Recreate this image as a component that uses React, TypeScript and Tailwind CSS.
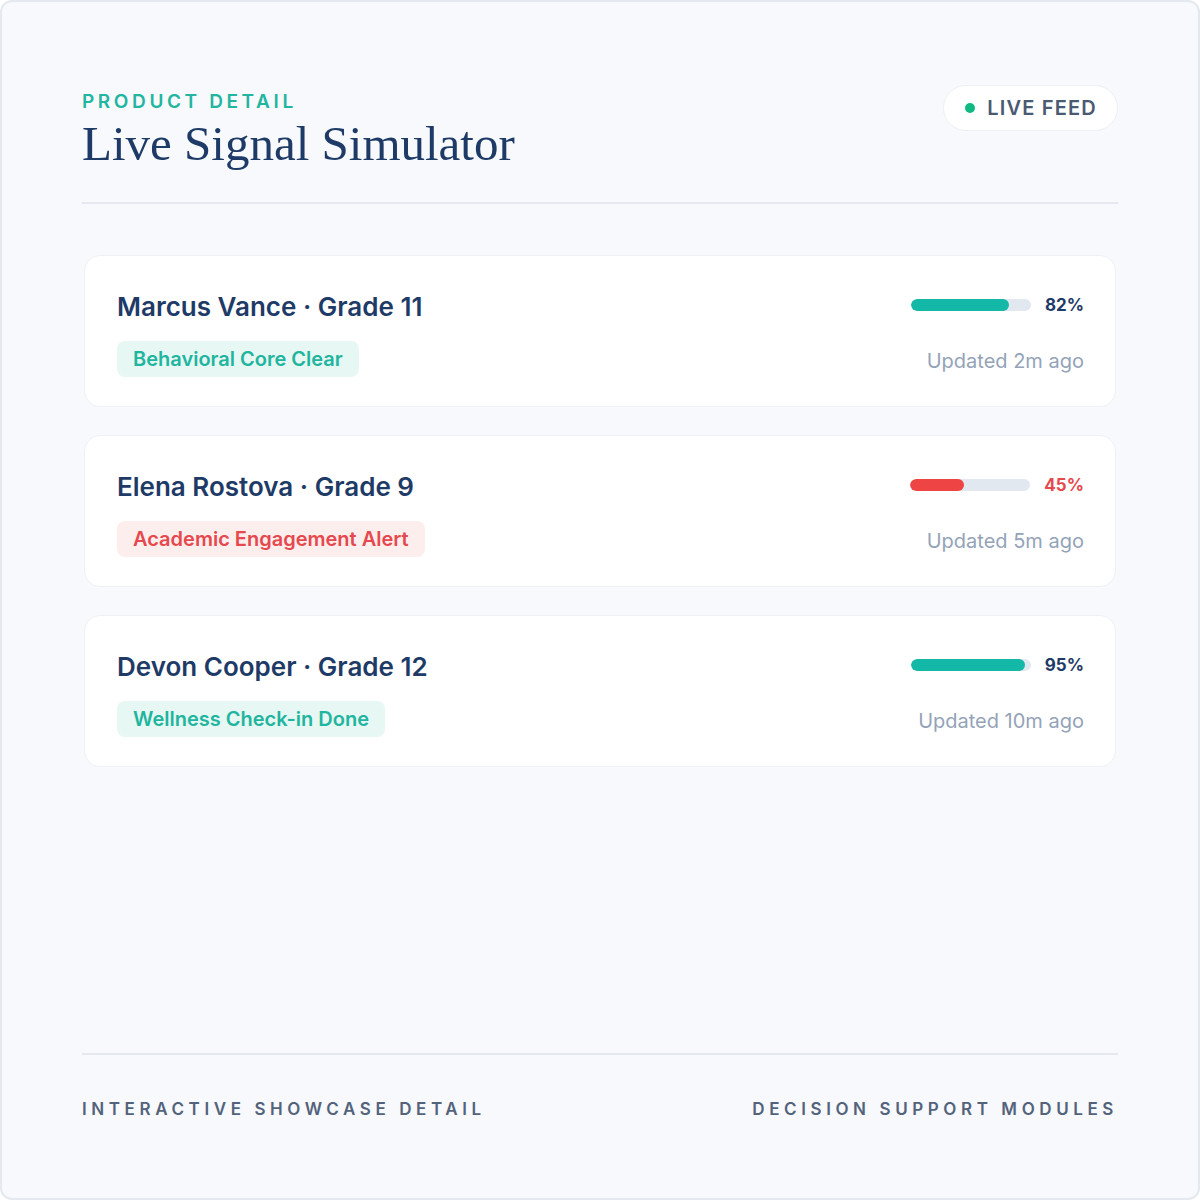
const students = [
  {
    name: 'Marcus Vance · Grade 11',
    tag: 'Behavioral Core Clear',
    alert: false,
    score: 82,
    updated: 'Updated 2m ago',
  },
  {
    name: 'Elena Rostova · Grade 9',
    tag: 'Academic Engagement Alert',
    alert: true,
    score: 45,
    updated: 'Updated 5m ago',
  },
  {
    name: 'Devon Cooper · Grade 12',
    tag: 'Wellness Check-in Done',
    alert: false,
    score: 95,
    updated: 'Updated 10m ago',
  },
];

function SignalCard({ s }: { s: (typeof students)[number] }) {
  return (
    <div className="flex h-[152px] items-start justify-between rounded-2xl border border-[#eef2f6] bg-white px-8 pt-[33px]">
      <div className="flex flex-col items-start gap-[16px]">
        <h3 className="text-[26px] leading-9 font-semibold text-[#1e3a66]">{s.name}</h3>
        <span
          className={[
            'rounded-lg px-4 pt-[6px] pb-[5px] text-[20px] leading-[25px] font-semibold',
            s.alert ? 'bg-[#fdeeee] text-[#e5484d]' : 'bg-[#e7f7f4] text-[#1fb59e]',
          ].join(' ')}
        >
          {s.tag}
        </span>
      </div>
      <div className="-mr-[1px] flex flex-col items-end gap-[32px] pt-[4px]">
        <div className="flex items-center gap-[14px]">
          <div className="h-3 w-[120px] overflow-hidden rounded-full bg-[#e2e8f0]">
            <div
              className={s.alert ? 'h-full rounded-full bg-[#ef4444]' : 'h-full rounded-full bg-[#14b8a6]'}
              style={{ width: `${s.score}%` }}
            />
          </div>
          <span
            className={[
              'text-[17px] leading-6 font-bold',
              s.alert ? 'text-[#e5484d]' : 'text-[#1e3a66]',
            ].join(' ')}
          >
            {s.score}%
          </span>
        </div>
        <span className="text-[20px] leading-6 text-[#94a3b8]">{s.updated}</span>
      </div>
    </div>
  );
}

export default function App() {
  return (
    <div
      className="flex h-[1200px] w-[1200px] flex-col rounded-xl border-2 border-[#e5e9ef] bg-[#f7f9fc] px-[80px]"
      style={{ fontFamily: 'Inter, "Noto Sans", sans-serif' }}
    >
      <header className="flex items-start justify-between pt-[88px]">
        <div>
          <p className="text-[19px] leading-6 font-semibold tracking-[0.19em] text-[#22b5a0]">
            PRODUCT DETAIL
          </p>
          <h1
            className="mt-[2px] text-[49px] leading-[56px] text-[#1e3a66]"
            style={{ fontFamily: '"Liberation Serif", "DejaVu Serif", serif' }}
          >
            Live Signal Simulator
          </h1>
        </div>
        <div className="-mt-[5px] flex h-[46px] items-center gap-3 rounded-full border border-[#edf0f4] bg-white pr-5 pl-[21px]">
          <span className="h-[10px] w-[10px] rounded-full bg-[#10b981]" />
          <span className="text-[20px] font-semibold tracking-[0.06em] text-[#4a5a72]">LIVE FEED</span>
        </div>
      </header>

      <div className="mt-[30px] h-[2px] bg-[#e5e9ef]" />

      <main className="mt-[51px] flex flex-col gap-7 px-[2px]">
        {students.map((s) => (
          <SignalCard key={s.name} s={s} />
        ))}
      </main>

      <div className="flex-1" />

      <div className="h-[2px] bg-[#e5e9ef]" />
      <footer className="flex h-[143px] items-start justify-between pt-[44px]">
        <span className="text-[17px] leading-5 font-semibold tracking-[0.27em] text-[#53637b]">
          INTERACTIVE SHOWCASE DETAIL
        </span>
        <span className="text-[17px] leading-5 font-semibold tracking-[0.27em] text-[#53637b]">
          DECISION SUPPORT MODULES
        </span>
      </footer>
    </div>
  );
}
